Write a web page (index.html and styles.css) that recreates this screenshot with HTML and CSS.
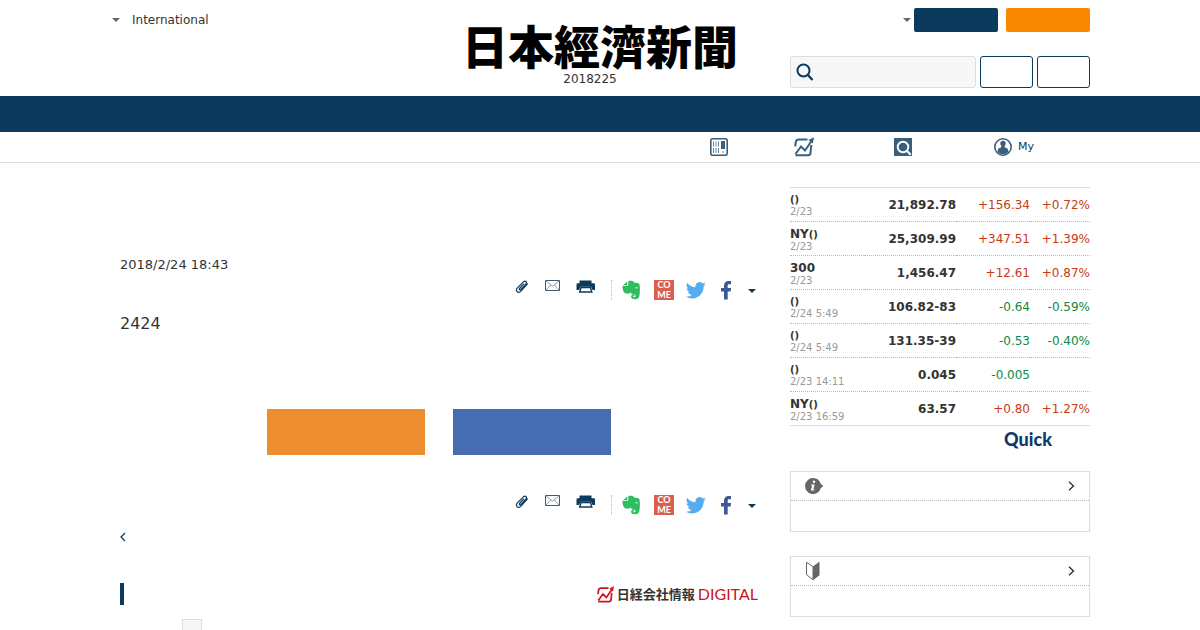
FILE: index.html
```html
<!DOCTYPE html>
<html lang="ja">
<head>
  <meta charset="UTF-8">
  <meta name="viewport" content="width=device-width, initial-scale=1.0">
  <title>日本経済新聞</title>
  <link rel="stylesheet" href="styles.css">
</head>
<body>
  <!-- shared icons -->
  <svg class="sprite" aria-hidden="true">
    <symbol id="i-clip" viewBox="0 0 14 14">
      <path d="M8.500 4.200 4.600 8.500c-.8 1 .4 2 1.300 1.100l5-5.600c1.600-2-.8-4-2.500-2.200L2.200 8.200c-2.200 2.700 1 5.600 3.500 3.100l6.800-7.500" fill="none" stroke="#0c3a5c" stroke-width="1.200" stroke-linecap="round"/>
    </symbol>
    <symbol id="i-mail" viewBox="0 0 15 12">
      <path d="M.5.5h14v10H.5z" fill="none" stroke="#3d5c77" stroke-width="1"/>
      <path d="m.8.800 6.700 5.400L14.200.8M.8 10.200l4.700-5M14.200 10.200l-4.700-5" fill="none" stroke="#6b8398" stroke-width=".8"/>
    </symbol>
    <symbol id="i-print" viewBox="0 0 20 14">
      <path d="M3.500.5h12v2.700h2A1.300 1.300 0 0 1 19 4.500V10h-2.500L15 6.800H4.500L3 10H.5V4.500A1.300 1.300 0 0 1 1.800 3.200h1.700z" fill="#0c3a5c"/>
      <path d="M5 7.500h9.500l1.300 4.500H3.700z" fill="#fff" stroke="#0c3a5c" stroke-width="1.400"/>
    </symbol>
    <symbol id="i-ever" viewBox="0 0 20 20">
      <path d="M6.300 1.200v3.600c0 .6-.4.900-1 .9H.5C.4 9.500 1.600 13 4 13.500c2 .4 3.700-.1 4.100-.5l.4-1c.4 1.900 1.300 2.200 3.100 2.300 1.500.2 1.900.7 1.900 1.700 0 .9-.6 1.300-1.500 1.300-1.100 0-1-.9-.4-1.400h.8v-1.700c-2-.1-3.500.9-3.300 2.800.2 1.700 1.300 2.200 3.300 2.200 3.600 0 4.700-1 5.100-4.200.5-3.500.6-7.300 0-10.600-.2-1-.9-1.300-2.300-1.500l-3-.3C12 1.400 10.300.8 8.200.8c-.8 0-1.500 0-1.900.4zm7 6.700c.6-1 2.200-.9 2.700.7-.9-.3-1.700-.3-2.800-.1zM5.300 1.500 1.400 4.900h3.300c.4 0 .6-.2.6-.6z" fill="#2dbe60" fill-rule="evenodd"/>
    </symbol>
    <symbol id="i-twitter" viewBox="0 0 24 24">
      <path d="M23.600 4.900c-.9.400-1.800.6-2.800.8 1-.6 1.800-1.600 2.200-2.700-1 .6-2 1-3.100 1.200a4.900 4.900 0 0 0-8.400 4.500A13.900 13.900 0 0 1 1.400 3.600a4.900 4.900 0 0 0 1.500 6.500c-.8 0-1.600-.2-2.200-.6v.1c0 2.400 1.700 4.300 3.900 4.800-.7.200-1.500.2-2.200.1.600 2 2.400 3.400 4.600 3.400A9.900 9.900 0 0 1-.3 19.900a13.900 13.900 0 0 0 7.500 2.200c9.100 0 14-7.500 14-14v-.6c1-.7 1.800-1.600 2.400-2.600z" fill="#55acee"/>
    </symbol>
    <symbol id="i-facebook" viewBox="0 0 16 20">
      <path d="M6 19.500V11.500H3V8h3V5.600C6 2.500 7.900.9 10.600.9c1 0 1.900.1 2.400.2V4.200h-1.700c-1.400 0-1.600.7-1.600 1.700V8h3.400l-.5 3.500H9.700v8z" fill="#3b5998"/>
    </symbol>
    <symbol id="i-chart" viewBox="0 0 20 20">
      <path d="M13.500 2.500H5Q2.200 2.500 1.800 5L1.200 9.500M17.300 8l-.8 8Q16.300 18.300 14 18.300H1.500M1.500 17 7 9.500l4 4L17.500 4" fill="none" stroke="currentColor" stroke-width="2"/>
      <path d="M20 .3 18.800 6.500 14.500 3z" fill="currentColor"/>
    </symbol>
    <symbol id="i-next" viewBox="0 0 8 10">
      <path d="m2 .800 4.500 4.200L2 9.200" fill="none" stroke="#333" stroke-width="1.400"/>
    </symbol>
  </svg>

  <header class="header">
    <div class="container header-inner">
      <div class="header-left">
        <a href="#" class="caret" aria-label="Menu"></a>
        <a href="#">International</a>
      </div>
      <div class="masthead">
        <h1>日本經濟新聞</h1>
        <p>2018225</p>
      </div>
      <div class="header-right">
        <div class="account">
          <a href="#" class="caret" aria-label="Account"></a>
          <button class="btn navy" aria-label="Login"></button>
          <button class="btn orange" aria-label="Register"></button>
        </div>
        <form class="search">
          <label class="search-box">
            <svg width="18" height="18" viewBox="0 0 18 18"><circle cx="7.500" cy="7.500" r="6" fill="none" stroke="#0c3a5c" stroke-width="2"/><path d="m11.500 11.500 5 5.500" stroke="#0c3a5c" stroke-width="2.400"/></svg>
            <input type="text" aria-label="Search">
          </label>
          <button type="button" class="btn outline" aria-label="Search articles"></button>
          <button type="button" class="btn outline" aria-label="Search prices"></button>
        </form>
      </div>
    </div>
  </header>

  <nav class="nav"></nav>

  <div class="subnav">
    <div class="container subnav-inner">
      <a href="#" class="paper" aria-label="Paper">
        <svg width="18" height="18" viewBox="0 0 18 18"><rect x=".8" y=".8" width="16.400" height="16.400" rx="2" fill="none" stroke="#3a5f7d" stroke-width="1.600"/><path d="M3.500 3.500v5M6 3.500v5M8.500 3.500v5M3.500 10v5M6 10v5M8.500 10v5M13 13v2" stroke="#6e879c" stroke-width="1"/><path d="M11 3h4v8h-4z" fill="#3a5f7d"/></svg>
      </a>
      <a href="#" aria-label="Chart"><svg width="20" height="20"><use href="#i-chart"/></svg></a>
      <a href="#" aria-label="Search">
        <svg width="18" height="18" viewBox="0 0 18 18"><path d="M0 0h18v18H0z" fill="#3a5f7d"/><circle cx="9" cy="9" r="5.300" fill="none" stroke="#fff" stroke-width="1.900"/><path d="m12.700 12.700 4 4" stroke="#fff" stroke-width="2"/></svg>
      </a>
      <a href="#">
        <svg width="18" height="18" viewBox="0 0 18 18"><circle cx="9" cy="9" r="8.200" fill="#fff" stroke="#3a5f7d" stroke-width="1.600"/><circle cx="9" cy="5.500" r="2.700" fill="#3a5f7d"/><path d="M7.500 7.500h3l.5 2c2.500.5 3.300 1.500 3.500 4.500a8 8 0 0 1-11 0c.2-3 1-4 3.500-4.500z" fill="#3a5f7d"/></svg>
        My
      </a>
    </div>
  </div>

  <div class="container content">
    <main class="main">
      <p class="date">2018/2/24 18:43</p>

      <div class="share">
        <div class="tools">
          <a href="#" aria-label="Clip"><svg width="14" height="14"><use href="#i-clip"/></svg></a>
          <a href="#" aria-label="Mail"><svg width="15" height="12"><use href="#i-mail"/></svg></a>
          <a href="#" aria-label="Print"><svg width="20" height="14"><use href="#i-print"/></svg></a>
        </div>
        <div class="social">
          <a href="#" aria-label="Evernote"><svg width="20" height="20"><use href="#i-ever"/></svg></a>
          <a href="#" class="come">CO<br>ME</a>
          <a href="#" aria-label="Twitter"><svg width="20" height="20"><use href="#i-twitter"/></svg></a>
          <a href="#" aria-label="Facebook"><svg width="16" height="20"><use href="#i-facebook"/></svg></a>
          <a href="#" class="more" aria-label="More"></a>
        </div>
      </div>

      <p class="lead">2424</p>

      <div class="actions">
        <button class="action register" aria-label="Register"></button>
        <button class="action login" aria-label="Login"></button>
      </div>

      <div class="share">
        <div class="tools">
          <a href="#" aria-label="Clip"><svg width="14" height="14"><use href="#i-clip"/></svg></a>
          <a href="#" aria-label="Mail"><svg width="15" height="12"><use href="#i-mail"/></svg></a>
          <a href="#" aria-label="Print"><svg width="20" height="14"><use href="#i-print"/></svg></a>
        </div>
        <div class="social">
          <a href="#" aria-label="Evernote"><svg width="20" height="20"><use href="#i-ever"/></svg></a>
          <a href="#" class="come">CO<br>ME</a>
          <a href="#" aria-label="Twitter"><svg width="20" height="20"><use href="#i-twitter"/></svg></a>
          <a href="#" aria-label="Facebook"><svg width="16" height="20"><use href="#i-facebook"/></svg></a>
          <a href="#" class="more" aria-label="More"></a>
        </div>
      </div>

      <a href="#" class="back" aria-label="Back"><svg width="6" height="10" viewBox="0 0 6 10"><path d="M5 1 1 5l4 4" fill="none" stroke="#0c3a5c" stroke-width="1.200"/></svg></a>

      <div class="company">
        <a href="#" class="company-logo">
          <svg width="17" height="17" viewBox="0 0 20 20"><use href="#i-chart"/></svg>
          <span class="jp">日経会社情報</span>
          <span class="digital">DIGITAL</span>
        </a>
      </div>
      <div class="tab"></div>
    </main>

    <aside class="side">
      <table class="market">
        <tr><th>()<small>2/23</small></th><td class="price">21,892.78</td><td class="up">+156.34</td><td class="up">+0.72%</td></tr>
        <tr><th><b>NY</b>()<small>2/23</small></th><td class="price">25,309.99</td><td class="up">+347.51</td><td class="up">+1.39%</td></tr>
        <tr><th><b>300</b><small>2/23</small></th><td class="price">1,456.47</td><td class="up">+12.61</td><td class="up">+0.87%</td></tr>
        <tr><th>()<small>2/24 5:49</small></th><td class="price">106.82-83</td><td class="down">-0.64</td><td class="down">-0.59%</td></tr>
        <tr><th>()<small>2/24 5:49</small></th><td class="price">131.35-39</td><td class="down">-0.53</td><td class="down">-0.40%</td></tr>
        <tr><th>()<small>2/23 14:11</small></th><td class="price">0.045</td><td class="down">-0.005</td><td></td></tr>
        <tr><th><b>NY</b>()<small>2/23 16:59</small></th><td class="price">63.57</td><td class="up">+0.80</td><td class="up">+1.27%</td></tr>
      </table>
      <a href="#" class="quick">Quick</a>

      <section class="box">
        <a href="#" class="box-head" aria-label="Information">
          <svg width="20" height="18" viewBox="0 0 20 18"><path d="M9 1a8 8 0 0 1 7.800 6L19.500 9l-2.700 2A8 8 0 1 1 9 1z" fill="#666"/><circle cx="10" cy="4.800" r="1.300" fill="#fff"/><path d="M7.200 7.500h3.500l-1.400 5h1.200l-.3 1H6.800l1.300-5H6.900z" fill="#fff"/></svg>
          <svg width="8" height="10"><use href="#i-next"/></svg>
        </a>
        <div class="box-body"></div>
      </section>

      <section class="box">
        <a href="#" class="box-head" aria-label="Beginners">
          <svg width="18" height="20" viewBox="0 0 18 20"><path d="M2.500 1.300 9 5.500v13.200l-6.500-5z" fill="#fff" stroke="#666" stroke-width="1"/><path d="m15.500.5-6.500 5v13.700l6.500-5z" fill="#666"/></svg>
          <svg width="8" height="10"><use href="#i-next"/></svg>
        </a>
        <div class="box-body"></div>
      </section>
    </aside>
  </div>
</body>
</html>
```

FILE: styles.css
```css
* {
  box-sizing: border-box;
}

body {
  margin: 0;
  background: #fff;
  color: #333;
  font-family: "DejaVu Sans", "Noto Sans CJK JP", sans-serif;
  font-size: 12px;
  line-height: 16px;
}

h1, p {
  margin: 0;
}

a {
  color: inherit;
  text-decoration: none;
}

svg {
  display: block;
}

.sprite {
  display: none;
}

.container {
  max-width: 980px;
  margin: 0 auto;
}

/* header */
.header-inner {
  display: grid;
  grid-template-columns: 1fr auto 1fr;
  height: 96px;
}

.header-left {
  display: flex;
  align-items: center;
  gap: 12px;
  height: 24px;
  margin-top: 8px;
  padding-left: 2px;
}

.caret {
  border: 4px solid transparent;
  border-top-color: #666;
  border-bottom: 0;
}

.masthead {
  padding-top: 20px;
  text-align: center;
}

.masthead h1 {
  color: #000;
  font-family: "Noto Sans CJK JP", sans-serif;
  font-size: 46px;
  font-weight: 900;
  line-height: 48px;
}

.masthead p {
  padding: 3px 20px 0 0;
}

.header-right {
  justify-self: end;
  width: 300px;
  padding-top: 8px;
}

.account {
  display: flex;
  align-items: center;
  justify-content: flex-end;
  gap: 8px;
}

.account .caret {
  margin-right: -5px;
}

.btn {
  flex: none;
  width: 84px;
  height: 24px;
  padding: 0;
  border: 0;
  border-radius: 2px;
}

.navy {
  background: #0c3a5c;
}

.orange {
  background: #f98700;
}

.search {
  display: flex;
  gap: 4px;
  margin-top: 24px;
}

.search-box {
  display: flex;
  flex: 1;
  align-items: center;
  min-width: 0;
  height: 32px;
  padding-left: 5px;
  border: 1px solid #ddd;
  border-radius: 3px;
  background: #f7f7f7;
}

.search-box input {
  flex: 1;
  min-width: 0;
  border: 0;
  outline: 0;
  background: transparent;
}

.outline {
  width: 53px;
  height: 32px;
  border: 1px solid #0c3a5c;
  border-radius: 3px;
  background: #fff;
}

/* navigation */
.nav {
  height: 36px;
  background: #0c3a5c;
}

.subnav {
  border-bottom: 1px solid #ddd;
}

.subnav-inner {
  display: flex;
  justify-content: flex-end;
  height: 30px;
}

.subnav a {
  display: flex;
  align-items: center;
  gap: 6px;
  width: 100px;
  color: #0c3a5c;
  font-size: 11px;
}

.subnav svg {
  color: #3a5f7d;
}

.subnav .paper {
  width: 84px;
}

.subnav a:last-child {
  width: 96px;
}

/* article */
.content {
  display: flex;
  justify-content: space-between;
  padding-left: 10px;
}

.main {
  width: 638px;
  padding-top: 92px;
}

.date {
  font-size: 13px;
  line-height: 20px;
}

.share {
  display: flex;
  justify-content: flex-end;
  gap: 15px;
  margin-top: 5px;
}

.tools {
  display: flex;
  gap: 16px;
}

.social {
  display: flex;
  gap: 12px;
  padding-left: 10px;
  border-left: 1px dotted #bbb;
}

.come {
  width: 20px;
  height: 20px;
  background: #d9604f;
  color: #fff;
  font-family: Lato, sans-serif;
  font-size: 9px;
  font-weight: bold;
  line-height: 10px;
  text-align: center;
}

.more {
  align-self: center;
  margin: 2px 2px 0;
  border: 4px solid transparent;
  border-top-color: #0c3a5c;
  border-bottom: 0;
}

.lead {
  margin-top: 10px;
  font-size: 16px;
  line-height: 28px;
}

.actions {
  display: flex;
  justify-content: center;
  gap: 28px;
  margin: 71px 0 40px;
}

.action {
  width: 158px;
  height: 46px;
  border: 0;
}

.register {
  background: #ec8d30;
}

.login {
  background: #466db1;
}

.back {
  display: flex;
  align-items: center;
  width: 20px;
  height: 20px;
  margin-top: 12px;
}

.company {
  display: flex;
  justify-content: flex-end;
  height: 22px;
  margin-top: 36px;
  border-left: 4px solid #0c3a5c;
}

.company-logo {
  display: flex;
  align-items: center;
  gap: 3px;
  color: #d0111b;
}

.jp {
  color: #333;
  font-family: "Noto Sans CJK JP", sans-serif;
  font-size: 13px;
  font-weight: bold;
}

.digital {
  font-family: Lato, sans-serif;
  font-size: 16px;
}

.tab {
  width: 20px;
  height: 11px;
  margin: 14px 0 0 62px;
  border: 1px solid #ddd;
  border-bottom: 0;
  background: #f7f7f7;
}

/* sidebar */
.side {
  width: 300px;
  padding-top: 24px;
}

.market {
  width: 100%;
  border-top: 1px solid #ddd;
  border-spacing: 0;
}

.market th,
.market td {
  height: 34px;
  padding: 0;
  border-bottom: 1px dotted #bbb;
  text-align: right;
}

.market tr:last-child th,
.market tr:last-child td {
  border-bottom: 1px solid #ddd;
}

.market th {
  padding-top: 3px;
  font-size: 10px;
  line-height: 12px;
  text-align: left;
}

.market b {
  font-size: 12px;
}

.market small {
  display: block;
  color: #999;
  font-size: 10px;
  font-weight: normal;
  line-height: 12px;
}

.market td:nth-child(3) {
  width: 74px;
}

.market td:nth-child(4) {
  width: 60px;
}

.price {
  font-weight: bold;
}

.up {
  color: #c93a10;
}

.down {
  color: #0a8a43;
}

.quick {
  display: block;
  padding: 4px 38px 0 0;
  color: #0c3a6c;
  font-family: Lato, sans-serif;
  font-size: 18px;
  font-weight: 900;
  line-height: 18px;
  text-align: right;
}

.box {
  margin-top: 24px;
  border: 1px solid #ddd;
}

.quick + .box {
  margin-top: 23px;
}

.box-head {
  display: flex;
  align-items: center;
  justify-content: space-between;
  height: 29px;
  padding: 0 14px 0 13px;
  border-bottom: 1px dotted #bbb;
}

.box-body {
  height: 30px;
}
```
